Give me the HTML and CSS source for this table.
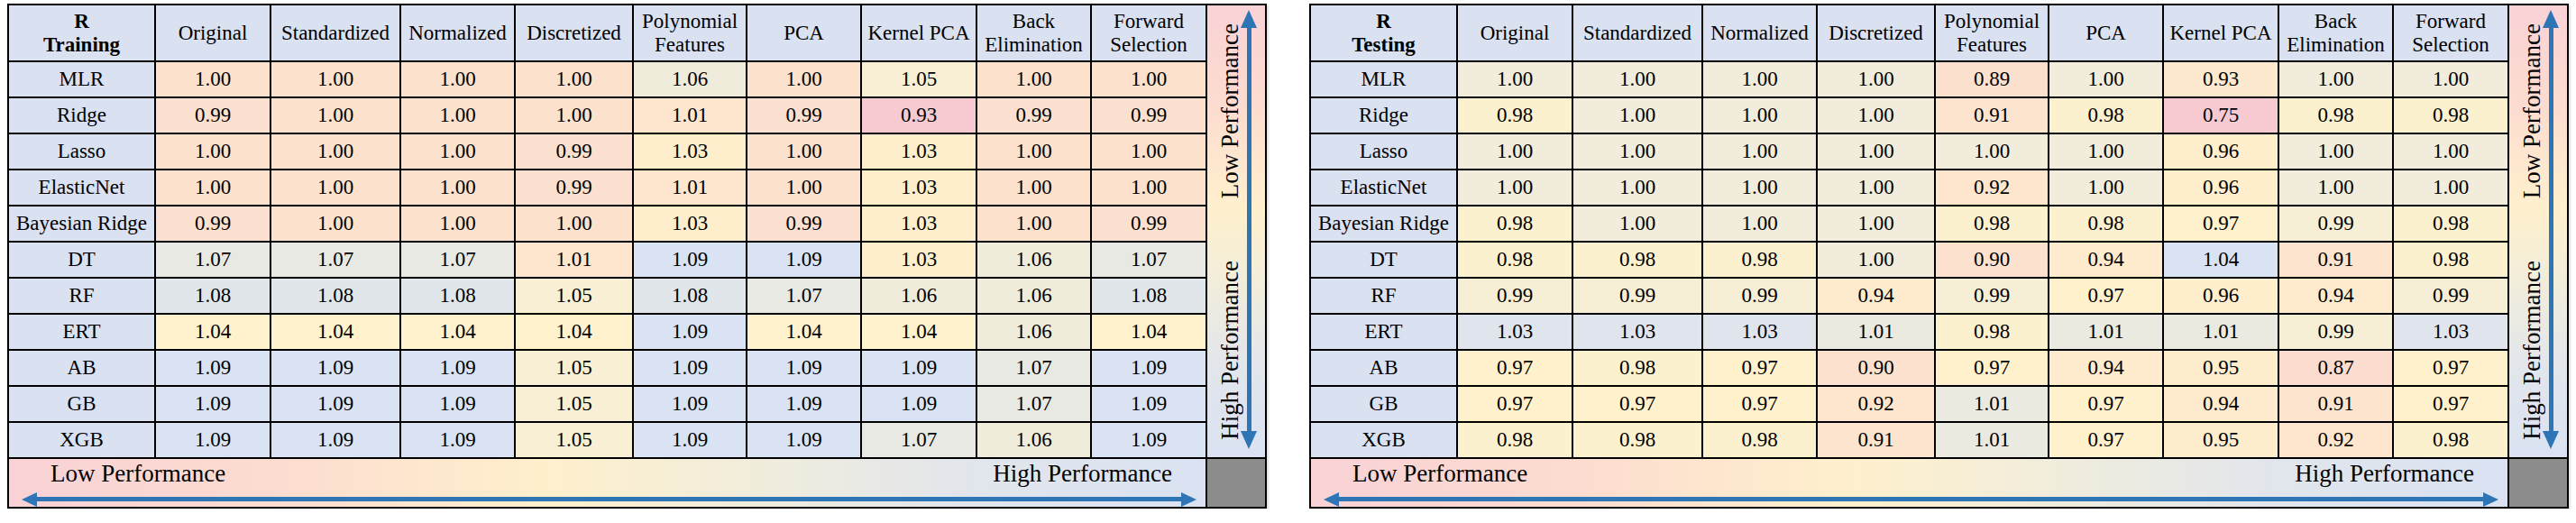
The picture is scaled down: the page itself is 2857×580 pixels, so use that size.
FILE: index.html
```html
<!DOCTYPE html>
<html>
<head>
<meta charset="utf-8">
<link rel="stylesheet" href="styles.css">
</head>
<body>
<div class="wrap">
  <div class="tbl">
    <div class="hd corner">R<br>Training</div>
    <div class="hd">Original</div>
    <div class="hd">Standardized</div>
    <div class="hd">Normalized</div>
    <div class="hd">Discretized</div>
    <div class="hd">Polynomial<br>Features</div>
    <div class="hd">PCA</div>
    <div class="hd">Kernel PCA</div>
    <div class="hd">Back<br>Elimination</div>
    <div class="hd">Forward<br>Selection</div>
    <div class="vcell">
      <div class="vtext"><span>Low Performance</span><span>High Performance</span></div>
      <div class="varrow"><div class="head-up"></div><div class="vline"></div><div class="head-down"></div></div>
    </div>

    <div class="lbl">MLR</div>
    <div class="c a100">1.00</div><div class="c a100">1.00</div><div class="c a100">1.00</div><div class="c a100">1.00</div><div class="c a106">1.06</div><div class="c a100">1.00</div><div class="c a105">1.05</div><div class="c a100">1.00</div><div class="c a100">1.00</div>
    <div class="lbl">Ridge</div>
    <div class="c a99">0.99</div><div class="c a100">1.00</div><div class="c a100">1.00</div><div class="c a100">1.00</div><div class="c a101">1.01</div><div class="c a99">0.99</div><div class="c a93">0.93</div><div class="c a99">0.99</div><div class="c a99">0.99</div>
    <div class="lbl">Lasso</div>
    <div class="c a100">1.00</div><div class="c a100">1.00</div><div class="c a100">1.00</div><div class="c a99">0.99</div><div class="c a103">1.03</div><div class="c a100">1.00</div><div class="c a103">1.03</div><div class="c a100">1.00</div><div class="c a100">1.00</div>
    <div class="lbl">ElasticNet</div>
    <div class="c a100">1.00</div><div class="c a100">1.00</div><div class="c a100">1.00</div><div class="c a99">0.99</div><div class="c a101">1.01</div><div class="c a100">1.00</div><div class="c a103">1.03</div><div class="c a100">1.00</div><div class="c a100">1.00</div>
    <div class="lbl">Bayesian Ridge</div>
    <div class="c a99">0.99</div><div class="c a100">1.00</div><div class="c a100">1.00</div><div class="c a100">1.00</div><div class="c a103">1.03</div><div class="c a99">0.99</div><div class="c a103">1.03</div><div class="c a100">1.00</div><div class="c a99">0.99</div>
    <div class="lbl">DT</div>
    <div class="c a107">1.07</div><div class="c a107">1.07</div><div class="c a107">1.07</div><div class="c a101">1.01</div><div class="c a109">1.09</div><div class="c a109">1.09</div><div class="c a103">1.03</div><div class="c a106">1.06</div><div class="c a107">1.07</div>
    <div class="lbl">RF</div>
    <div class="c a108">1.08</div><div class="c a108">1.08</div><div class="c a108">1.08</div><div class="c a105">1.05</div><div class="c a108">1.08</div><div class="c a107">1.07</div><div class="c a106">1.06</div><div class="c a106">1.06</div><div class="c a108">1.08</div>
    <div class="lbl">ERT</div>
    <div class="c a104">1.04</div><div class="c a104">1.04</div><div class="c a104">1.04</div><div class="c a104">1.04</div><div class="c a109">1.09</div><div class="c a104">1.04</div><div class="c a104">1.04</div><div class="c a106">1.06</div><div class="c a104">1.04</div>
    <div class="lbl">AB</div>
    <div class="c a109">1.09</div><div class="c a109">1.09</div><div class="c a109">1.09</div><div class="c a105">1.05</div><div class="c a109">1.09</div><div class="c a109">1.09</div><div class="c a109">1.09</div><div class="c a107">1.07</div><div class="c a109">1.09</div>
    <div class="lbl">GB</div>
    <div class="c a109">1.09</div><div class="c a109">1.09</div><div class="c a109">1.09</div><div class="c a105">1.05</div><div class="c a109">1.09</div><div class="c a109">1.09</div><div class="c a109">1.09</div><div class="c a107">1.07</div><div class="c a109">1.09</div>
    <div class="lbl">XGB</div>
    <div class="c a109">1.09</div><div class="c a109">1.09</div><div class="c a109">1.09</div><div class="c a105">1.05</div><div class="c a109">1.09</div><div class="c a109">1.09</div><div class="c a107">1.07</div><div class="c a106">1.06</div><div class="c a109">1.09</div>

    <div class="foot">
      <div class="ftext"><span>Low Performance</span><span>High Performance</span></div>
      <div class="farrow"><div class="head-left"></div><div class="hline"></div><div class="head-right"></div></div>
    </div>
    <div class="gray"></div>
  </div>

  <div class="tbl">
    <div class="hd corner">R<br>Testing</div>
    <div class="hd">Original</div>
    <div class="hd">Standardized</div>
    <div class="hd">Normalized</div>
    <div class="hd">Discretized</div>
    <div class="hd">Polynomial<br>Features</div>
    <div class="hd">PCA</div>
    <div class="hd">Kernel PCA</div>
    <div class="hd">Back<br>Elimination</div>
    <div class="hd">Forward<br>Selection</div>
    <div class="vcell">
      <div class="vtext"><span>Low Performance</span><span>High Performance</span></div>
      <div class="varrow"><div class="head-up"></div><div class="vline"></div><div class="head-down"></div></div>
    </div>

    <div class="lbl">MLR</div>
    <div class="c b100">1.00</div><div class="c b100">1.00</div><div class="c b100">1.00</div><div class="c b100">1.00</div><div class="c b89">0.89</div><div class="c b100">1.00</div><div class="c b93">0.93</div><div class="c b100">1.00</div><div class="c b100">1.00</div>
    <div class="lbl">Ridge</div>
    <div class="c b98">0.98</div><div class="c b100">1.00</div><div class="c b100">1.00</div><div class="c b100">1.00</div><div class="c b91">0.91</div><div class="c b98">0.98</div><div class="c b75">0.75</div><div class="c b98">0.98</div><div class="c b98">0.98</div>
    <div class="lbl">Lasso</div>
    <div class="c b100">1.00</div><div class="c b100">1.00</div><div class="c b100">1.00</div><div class="c b100">1.00</div><div class="c b100">1.00</div><div class="c b100">1.00</div><div class="c b96">0.96</div><div class="c b100">1.00</div><div class="c b100">1.00</div>
    <div class="lbl">ElasticNet</div>
    <div class="c b100">1.00</div><div class="c b100">1.00</div><div class="c b100">1.00</div><div class="c b100">1.00</div><div class="c b92">0.92</div><div class="c b100">1.00</div><div class="c b96">0.96</div><div class="c b100">1.00</div><div class="c b100">1.00</div>
    <div class="lbl">Bayesian Ridge</div>
    <div class="c b98">0.98</div><div class="c b100">1.00</div><div class="c b100">1.00</div><div class="c b100">1.00</div><div class="c b98">0.98</div><div class="c b98">0.98</div><div class="c b97">0.97</div><div class="c b99">0.99</div><div class="c b98">0.98</div>
    <div class="lbl">DT</div>
    <div class="c b98">0.98</div><div class="c b98">0.98</div><div class="c b98">0.98</div><div class="c b100">1.00</div><div class="c b90">0.90</div><div class="c b94">0.94</div><div class="c b104">1.04</div><div class="c b91">0.91</div><div class="c b98">0.98</div>
    <div class="lbl">RF</div>
    <div class="c b99">0.99</div><div class="c b99">0.99</div><div class="c b99">0.99</div><div class="c b94">0.94</div><div class="c b99">0.99</div><div class="c b97">0.97</div><div class="c b96">0.96</div><div class="c b94">0.94</div><div class="c b99">0.99</div>
    <div class="lbl">ERT</div>
    <div class="c b103">1.03</div><div class="c b103">1.03</div><div class="c b103">1.03</div><div class="c b101">1.01</div><div class="c b98">0.98</div><div class="c b101">1.01</div><div class="c b101">1.01</div><div class="c b99">0.99</div><div class="c b103">1.03</div>
    <div class="lbl">AB</div>
    <div class="c b97">0.97</div><div class="c b98">0.98</div><div class="c b97">0.97</div><div class="c b90">0.90</div><div class="c b97">0.97</div><div class="c b94">0.94</div><div class="c b95">0.95</div><div class="c b87">0.87</div><div class="c b97">0.97</div>
    <div class="lbl">GB</div>
    <div class="c b97">0.97</div><div class="c b97">0.97</div><div class="c b97">0.97</div><div class="c b92">0.92</div><div class="c b101">1.01</div><div class="c b97">0.97</div><div class="c b94">0.94</div><div class="c b91">0.91</div><div class="c b97">0.97</div>
    <div class="lbl">XGB</div>
    <div class="c b98">0.98</div><div class="c b98">0.98</div><div class="c b98">0.98</div><div class="c b91">0.91</div><div class="c b101">1.01</div><div class="c b97">0.97</div><div class="c b95">0.95</div><div class="c b92">0.92</div><div class="c b98">0.98</div>

    <div class="foot">
      <div class="ftext"><span>Low Performance</span><span>High Performance</span></div>
      <div class="farrow"><div class="head-left"></div><div class="hline"></div><div class="head-right"></div></div>
    </div>
    <div class="gray"></div>
  </div>
</div>
</body>
</html>
```

FILE: styles.css
```css
html, body {
  margin: 0;
  background: #ffffff;
}
body {
  padding: 4px 0 0 8px;
  font-family: "Liberation Serif", "Times New Roman", serif;
  font-size: 23px;
  color: #000;
}
.wrap {
  display: flex;
  gap: 47px;
  align-items: flex-start;
}
.tbl {
  display: grid;
  grid-template-columns: 161px 126px 142px 125px 129px 124px 125px 126px 125px 126px 64px;
  grid-template-rows: 61px repeat(11, 38px) 53px;
  gap: 2px;
  padding: 2px;
  background: #000;
  box-shadow: 2px 2px 2px rgba(0, 0, 0, 0.12);
}
.hd, .lbl, .c {
  display: flex;
  align-items: center;
  justify-content: center;
  text-align: center;
  white-space: nowrap;
}
.hd {
  background: #dae1f1;
  line-height: 26px;
}
.corner {
  font-weight: bold;
}
.lbl {
  background: #dae1f1;
}

/* vertical legend column */
.vcell {
  grid-column: 11;
  grid-row: 1 / span 12;
  display: flex;
  padding-left: 10px;
  background: linear-gradient(to bottom, #f9d2d6 0%, #fcdcd0 22%, #fff0cd 45%, #f1eddc 62%, #e2e6ec 80%, #dae2f2 100%);
}
.vtext {
  width: 30px;
  display: flex;
  flex-direction: column;
  justify-content: space-between;
  align-items: center;
  padding: 20px 0 19px;
  font-size: 27px;
}
.vtext span {
  writing-mode: vertical-rl;
  transform: rotate(180deg);
  line-height: 30px;
  white-space: nowrap;
}
.varrow {
  width: 20px;
  margin-left: -4px;
  display: flex;
  flex-direction: column;
  align-items: center;
  padding: 5px 0 9px;
}
.head-up {
  width: 0;
  height: 0;
  border-left: 9px solid transparent;
  border-right: 9px solid transparent;
  border-bottom: 20px solid #2e75b6;
}
.head-down {
  width: 0;
  height: 0;
  border-left: 9px solid transparent;
  border-right: 9px solid transparent;
  border-top: 20px solid #2e75b6;
}
.vline {
  flex: 1;
  width: 5px;
  background: #2e75b6;
}

/* footer legend row */
.foot {
  grid-column: 1 / 11;
  padding: 3px 10px 0 14px;
  background: linear-gradient(to right, #f9d2d6 0%, #fcdcd0 22%, #fff0cd 45%, #f1eddc 62%, #e2e6ec 80%, #dae2f2 100%);
}
.ftext {
  display: flex;
  justify-content: space-between;
  padding: 0 27px 0 32px;
  font-size: 27px;
  line-height: 27px;
  white-space: nowrap;
}
.farrow {
  display: flex;
  align-items: center;
  margin-top: 7px;
  height: 15px;
}
.head-left {
  width: 0;
  height: 0;
  border-top: 8px solid transparent;
  border-bottom: 8px solid transparent;
  border-right: 17px solid #2e75b6;
}
.head-right {
  width: 0;
  height: 0;
  border-top: 8px solid transparent;
  border-bottom: 8px solid transparent;
  border-left: 17px solid #2e75b6;
}
.hline {
  flex: 1;
  height: 5px;
  background: #2e75b6;
}
.gray {
  background: #8c8c8c;
}

/* training colour scale */
.a93 { background: #f7cad2; }
.a99 { background: #fbe0cf; }
.a100 { background: #fce1cd; }
.a101 { background: #fde6cd; }
.a103 { background: #feeecc; }
.a104 { background: #fff2cc; }
.a105 { background: #f8efd4; }
.a106 { background: #f0ecdc; }
.a107 { background: #e9e9e3; }
.a108 { background: #e1e6eb; }
.a109 { background: #dae3f3; }

/* testing colour scale */
.b75 { background: #f7cad2; }
.b87 { background: #fbdccf; }
.b89 { background: #fce0ce; }
.b90 { background: #fce2ce; }
.b91 { background: #fde4ce; }
.b92 { background: #fde6cd; }
.b93 { background: #fde9cd; }
.b94 { background: #feebcd; }
.b95 { background: #feedcd; }
.b96 { background: #ffefcc; }
.b97 { background: #fff1cc; }
.b98 { background: #fcf1cf; }
.b99 { background: #f6eed5; }
.b100 { background: #f1ecdb; }
.b101 { background: #ebeae1; }
.b103 { background: #e0e5ed; }
.b104 { background: #dae3f3; }
```
